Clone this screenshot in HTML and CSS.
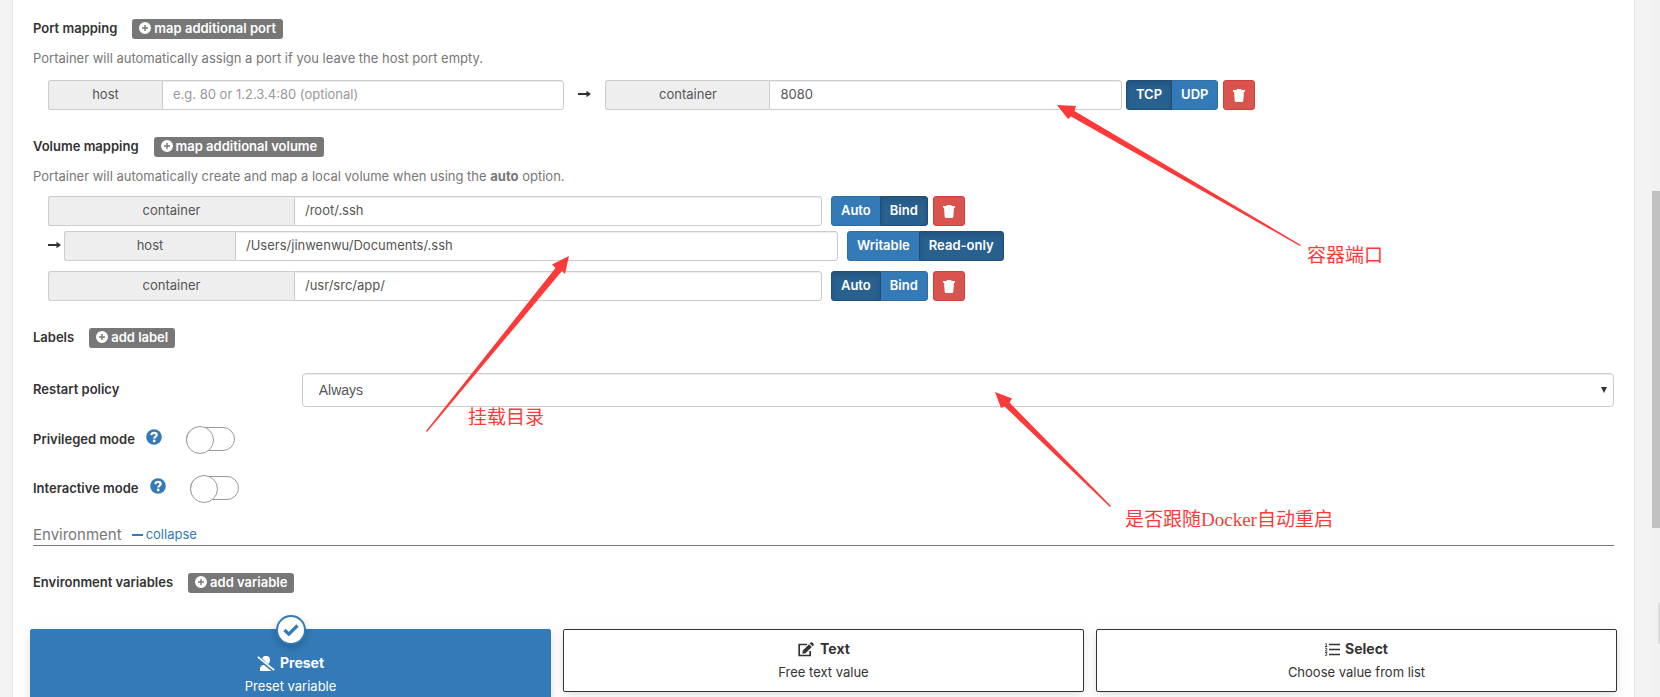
FILE: index.html
```html
<!DOCTYPE html>
<html lang="en">
<head>
  <meta charset="UTF-8">
  <meta name="viewport" content="width=device-width, initial-scale=1.0">
  <title>Portainer</title>
  <link rel="stylesheet" href="styles.css">
</head>
<body>
  <!-- shared icons -->
  <svg class="sprite" aria-hidden="true">
    <symbol id="plus-circle" viewBox="0 0 12 12">
      <path fill-rule="evenodd" d="M6 0a6 6 0 1 0 0 12A6 6 0 0 0 6 0zM5.3 3h1.4v2.3H9v1.4H6.700V9H5.300V6.700H3V5.300h2.300z"/>
    </symbol>
    <symbol id="trash" viewBox="0 0 12 13">
      <path d="M4 0h4l.6 1H12v1.800H0V1h3.400zM1 2.800h10l-.7 9q-.1 1.200-1.200 1.200H2.900q-1.100 0-1.200-1.200z"/>
    </symbol>
    <symbol id="arrow-right" viewBox="0 0 13 8">
      <path d="M0 3h8.500V.8L13 4 8.500 7.200V5H0z"/>
    </symbol>
    <symbol id="question" viewBox="0 0 16 16">
      <circle cx="8" cy="8" r="7.800"/>
      <path d="M5.300 6.200C5.500 4.500 6.600 3.800 8.100 3.800c1.600 0 2.600.8 2.600 2.100 0 1.700-2.400 1.700-2.400 3.500" fill="none" stroke="#fff" stroke-width="2.200"/>
      <circle cx="8.200" cy="12" r="1.400" fill="#fff"/>
    </symbol>
  </svg>

  <main class="panel">
    <form class="form">
      <div class="section-head">
        <span class="title">Port mapping</span>
        <button type="button" class="badge"><svg class="icon-plus"><use href="#plus-circle"/></svg>map additional port</button>
      </div>
      <p class="help">Portainer will automatically assign a port if you leave the host port empty.</p>
      <div class="rows ports">
        <div class="row">
          <div class="input-group third">
            <label class="addon addon-xs" for="port_host">host</label>
            <input type="text" id="port_host" placeholder="e.g. 80 or 1.2.3.4:80 (optional)">
          </div>
          <svg class="icon-arrow between"><use href="#arrow-right"/></svg>
          <div class="input-group third">
            <label class="addon addon-sm" for="port_container">container</label>
            <input type="text" id="port_container" value="8080">
          </div>
          <div class="actions close">
            <div class="btn-group"><button type="button" class="btn active">TCP</button><button type="button" class="btn">UDP</button></div>
            <button type="button" class="btn btn-danger" aria-label="Remove port"><svg class="icon-trash"><use href="#trash"/></svg></button>
          </div>
        </div>
      </div>

      <div class="section-head spaced">
        <span class="title">Volume mapping</span>
        <button type="button" class="badge"><svg class="icon-plus"><use href="#plus-circle"/></svg>map additional volume</button>
      </div>
      <p class="help">Portainer will automatically create and map a local volume when using the <b>auto</b> option.</p>
      <div class="rows">
        <div class="volume">
          <div class="row">
            <div class="input-group half">
              <label class="addon addon-lg" for="vol1">container</label>
              <input type="text" id="vol1" value="/root/.ssh">
            </div>
            <div class="actions">
              <div class="btn-group"><button type="button" class="btn">Auto</button><button type="button" class="btn active">Bind</button></div>
              <button type="button" class="btn btn-danger" aria-label="Remove volume"><svg class="icon-trash"><use href="#trash"/></svg></button>
            </div>
          </div>
          <div class="row">
            <svg class="icon-arrow lead"><use href="#arrow-right"/></svg>
            <div class="input-group half">
              <label class="addon addon-md" for="vol1_host">host</label>
              <input type="text" id="vol1_host" value="/Users/jinwenwu/Documents/.ssh">
            </div>
            <div class="actions">
              <div class="btn-group"><button type="button" class="btn">Writable</button><button type="button" class="btn active">Read-only</button></div>
            </div>
          </div>
        </div>
        <div class="volume">
          <div class="row">
            <div class="input-group half">
              <label class="addon addon-lg" for="vol2">container</label>
              <input type="text" id="vol2" value="/usr/src/app/">
            </div>
            <div class="actions">
              <div class="btn-group"><button type="button" class="btn active">Auto</button><button type="button" class="btn">Bind</button></div>
              <button type="button" class="btn btn-danger" aria-label="Remove volume"><svg class="icon-trash"><use href="#trash"/></svg></button>
            </div>
          </div>
        </div>
      </div>

      <div class="section-head spaced">
        <span class="title">Labels</span>
        <button type="button" class="badge"><svg class="icon-plus"><use href="#plus-circle"/></svg>add label</button>
      </div>

      <div class="restart">
        <label class="title" for="restart_policy">Restart policy</label>
        <div class="select-wrap">
          <select id="restart_policy">
            <option>Always</option>
            <option>Unless stopped</option>
            <option>On failure</option>
            <option>None</option>
          </select>
          <svg class="caret" viewBox="0 0 6 6"><path d="M0 0h6L3 6z"/></svg>
        </div>
      </div>

      <div class="switch-row">
        <label class="title" for="privileged">Privileged mode</label>
        <svg class="icon-help"><use href="#question"/></svg>
        <input type="checkbox" class="switch" id="privileged">
      </div>
      <div class="switch-row">
        <label class="title" for="interactive">Interactive mode</label>
        <svg class="icon-help"><use href="#question"/></svg>
        <input type="checkbox" class="switch" id="interactive">
      </div>

      <div class="section-title">
        <span>Environment</span>
        <a href="#"><svg class="icon-minus" viewBox="0 0 11 2"><path d="M0 0h11v2H0z"/></svg>collapse</a>
      </div>

      <div class="section-head env-head">
        <span class="title">Environment variables</span>
        <button type="button" class="badge"><svg class="icon-plus"><use href="#plus-circle"/></svg>add variable</button>
      </div>
    </form>

    <div class="cards">
      <button type="button" class="card selected">
        <span class="check"><svg viewBox="0 0 16 12"><path d="M1.500 6l4.300 4.200L14.500 1.500" fill="none" stroke="currentColor" stroke-width="3.200"/></svg></span>
        <span class="card-title">
          <svg class="icon-card" viewBox="0 0 18 15"><path d="M5.200 2.600A4 4 0 0 1 13 4.200c0 1.700-.8 3.200-2 3.900zM3 15v-2.200C3 10.600 4.500 9.300 7 9.100l7.500 5.900z"/><path d="M.8.800l16.400 13.400" fill="none" stroke="currentColor" stroke-width="1.700"/></svg>
          Preset
        </span>
        <span class="card-text">Preset variable</span>
      </button>
      <button type="button" class="card">
        <span class="card-title">
          <svg class="icon-card" viewBox="0 0 18 15"><path d="M10 2.500H2.200v11h11V9" fill="none" stroke="currentColor" stroke-width="1.700"/><path d="M5.800 8.500l6.200-6.200 2.800 2.800-6.200 6.200-3.200.5zM12.800 1.500l.9-.9q.8-.6 1.600 0l1.200 1.200q.6.800 0 1.600l-.9.900z"/></svg>
          Text
        </span>
        <span class="card-text">Free text value</span>
      </button>
      <button type="button" class="card">
        <span class="card-title">
          <svg class="icon-list" viewBox="0 0 15 13"><path d="M4 1.500h11M4 6.500h11M4 11.500h11" fill="none" stroke="currentColor" stroke-width="1.700"/><path d="M.3.800h1V3.500M0 3.500h2.300M0 5.200h1.800v1.300L.3 8h2M0 9.500h2L1 10.800q1.200 0 1 1-.4.900-2 .6" fill="none" stroke="currentColor" stroke-width=".9"/></svg>
          Select
        </span>
        <span class="card-text">Choose value from list</span>
      </button>
    </div>
  </main>

  <div class="scrollbar"><div class="thumb"></div><div class="handle"></div></div>

  <!-- red notes over the form -->
  <svg class="arrows" aria-hidden="true">
    <path d="M1057 105l19 1-1.500 5L1301 245l-1 1L1071 116.500l-3 2.500z"/>
    <path d="M569 256l-4 18-3-3L427 432l-1-1L555.500 268l-3.500-3.500z"/>
    <path d="M995 392l17 6.500-2.500 4L1111 506l-1 1L1004.500 406.500l-3.500 1.500z"/>
  </svg>
  <span class="note note-port">容器端口</span>
  <span class="note note-volume">挂载目录</span>
  <span class="note note-restart">是否跟随Docker自动重启</span>
</body>
</html>
```

FILE: styles.css
```css
* {
  box-sizing: border-box;
}

body {
  display: flex;
  position: relative;
  height: 100vh;
  margin: 0;
  padding-left: 12px;
  overflow: hidden;
  background-color: #f3f3f3;
  color: #333;
  font-family: Inter, "Noto Sans", sans-serif;
  font-size: 13px;
  line-height: 20px;
}

button,
input {
  font-family: inherit;
  font-size: 13px;
}

svg {
  flex: none;
  fill: currentColor;
}

.sprite {
  position: absolute;
  width: 0;
  height: 0;
}

.panel {
  flex: 1;
  min-width: 0;
  height: max-content;
  padding-top: 19px;
  border: 1px solid #e7e7e7;
  border-top: 0;
  background-color: #fff;
}

.form {
  padding: 0 20px;
}

/* headings */
.section-head {
  display: flex;
  align-items: flex-start;
  gap: 15px;
}

.section-head .title {
  line-height: 18px;
}

.spaced {
  margin-top: 27px;
}

.title {
  font-weight: 600;
}

.badge {
  display: flex;
  align-items: center;
  gap: 3px;
  height: 20px;
  padding: 0 7px 2px;
  border: 0;
  border-radius: 3px;
  background-color: #777;
  color: #fff;
  font-weight: 600;
  line-height: 18px;
}

.icon-plus {
  width: 12px;
  height: 12px;
}

.help {
  margin: 9px 0 10px;
  color: #777;
}

/* mapping rows */
.rows {
  display: flex;
  flex-direction: column;
  gap: 10px;
  padding: 0 15px;
}

.ports {
  padding-top: 2px;
}

.volume {
  display: flex;
  flex-direction: column;
  gap: 5px;
}

.row {
  display: flex;
  align-items: center;
}

.input-group {
  display: flex;
  height: 30px;
}

.third {
  width: 33.3%;
}

.half {
  width: 49.9%;
}

.addon {
  padding: 3px 0;
  border: 1px solid #ccc;
  border-right: 0;
  border-radius: 3px 0 0 3px;
  background-color: #eee;
  color: #555;
  text-align: center;
}

.addon-xs { width: 114px; }
.addon-sm { width: 164px; }
.addon-md { width: 171px; }
.addon-lg { width: 246px; }

.input-group input {
  flex: 1;
  min-width: 0;
  padding: 0 10px 2px;
  border: 1px solid #ccc;
  border-radius: 0 3px 3px 0;
  box-shadow: inset 0 1px 1px rgba(0, 0, 0, .075);
  background-color: #fff;
  color: #555;
}

.input-group input::placeholder {
  color: #999;
}

.icon-arrow {
  width: 13px;
  height: 8px;
}

.between {
  margin: 0 14px 2px;
}

.lead {
  margin: 0 3px 2px 0;
}

.actions {
  display: flex;
  gap: 5px;
  margin-left: 9px;
}

.close {
  margin-left: 4px;
}

.btn-group {
  display: flex;
}

.btn {
  height: 30px;
  padding: 0 9px 2px;
  border: 1px solid #2e6da4;
  border-radius: 3px;
  background-color: #337ab7;
  color: #fff;
  font-weight: 600;
}

.btn-group .btn:first-child {
  border-radius: 3px 0 0 3px;
}

.btn-group .btn:last-child {
  margin-left: -1px;
  border-radius: 0 3px 3px 0;
}

.btn.active {
  z-index: 1;
  border-color: #204d74;
  background-color: #286090;
  box-shadow: inset 0 3px 5px rgba(0, 0, 0, .125);
}

.btn-danger {
  display: flex;
  align-items: center;
  justify-content: center;
  width: 32px;
  padding: 0;
  border-color: #d43f3a;
  background-color: #d9534f;
}

.icon-trash {
  width: 12px;
  height: 13px;
}

/* restart policy */
.restart {
  display: flex;
  align-items: center;
  margin-top: 25px;
}

.restart .title {
  width: 17%;
  padding-bottom: 2px;
}

.select-wrap {
  position: relative;
  flex: 1;
}

.select-wrap select {
  display: block;
  appearance: none;
  width: 100%;
  height: 34px;
  padding: 0 16px;
  border: 1px solid #ccc;
  border-radius: 4px;
  box-shadow: inset 0 1px 1px rgba(0, 0, 0, .075);
  background-color: #fff;
  color: #555;
  font-family: "Liberation Sans", Arial, sans-serif;
  font-size: 14px;
}

.caret {
  position: absolute;
  top: 14px;
  right: 7px;
  width: 6px;
  height: 6px;
}

/* switches */
.switch-row {
  display: flex;
  align-items: center;
  height: 26px;
  margin-top: 19px;
}

.switch-row + .switch-row {
  margin-top: 23px;
}

.icon-help {
  width: 16px;
  height: 16px;
  margin: 0 24px 4px 11px;
  color: #337ab7;
}

.switch {
  appearance: none;
  position: relative;
  width: 49px;
  height: 24px;
  margin: 0;
  border: 1px solid #999;
  border-radius: 12px;
  background-color: #fff;
}

.switch::before {
  content: "";
  position: absolute;
  top: -2px;
  left: -1px;
  width: 26px;
  height: 26px;
  border: 1px solid #999;
  border-radius: 50%;
  background-color: #fff;
}

/* environment */
.section-title {
  display: flex;
  align-items: center;
  gap: 10px;
  margin-top: 23px;
  border-bottom: 1px solid #777;
  color: #777;
  font-size: 15px;
  line-height: 21px;
}

.section-title a {
  display: flex;
  align-items: center;
  gap: 3px;
  color: #337ab7;
  font-size: 13px;
  text-decoration: none;
}

.icon-minus {
  width: 11px;
  height: 2px;
}

.env-head {
  margin-top: 27px;
}

.cards {
  display: flex;
  align-items: flex-start;
  gap: 12px;
  margin-top: 36px;
  padding: 0 17px 20px;
}

.card {
  display: flex;
  flex: 1;
  flex-direction: column;
  align-items: center;
  gap: 3px;
  position: relative;
  padding: 9px 10px;
  border: 1px solid #333;
  border-radius: 2px;
  box-shadow: 0 3px 10px -2px rgba(161, 170, 166, .5);
  background-color: #fff;
  color: #333;
  line-height: 20px;
}

.card.selected {
  padding: 23px 10px;
  border-color: #337ab7;
  background-color: #337ab7;
  color: #fff;
}

.card-title {
  display: flex;
  align-items: center;
  gap: 5px;
  font-size: 14px;
  font-weight: 700;
}

.icon-card {
  width: 18px;
  height: 15px;
}

.icon-list {
  width: 15px;
  height: 13px;
}

.check {
  display: flex;
  align-items: center;
  justify-content: center;
  position: absolute;
  top: -15px;
  left: calc(50% - 15px);
  width: 30px;
  height: 30px;
  border: 2px solid #337ab7;
  border-radius: 50%;
  box-shadow: 0 3px 10px -2px rgba(0, 0, 0, .3);
  background-color: #fff;
  color: #337ab7;
}

.check svg {
  width: 16px;
  height: 12px;
}

/* page scrollbar */
.scrollbar {
  position: relative;
  width: 9px;
  margin-left: 16px;
  padding-left: 1px;
  background-color: #f1f1f1;
}

.thumb {
  height: 337px;
  margin-top: 191px;
  background-color: #c1c1c1;
}

.handle {
  position: absolute;
  top: 602px;
  right: 0;
  width: 2px;
  height: 42px;
  border-radius: 2px 0 0 2px;
  background-color: #ddd;
}

/* notes */
.arrows {
  position: absolute;
  top: 0;
  left: 0;
  width: 100%;
  height: 100%;
  fill: #fd3a3a;
  pointer-events: none;
}

.note {
  position: absolute;
  color: #fd3a3a;
  font-family: "Liberation Serif", "Noto Sans CJK SC", serif;
  font-size: 19px;
  line-height: 24px;
}

.note-port {
  top: 244px;
  left: 1307px;
}

.note-volume {
  top: 406px;
  left: 468px;
}

.note-restart {
  top: 508px;
  left: 1125px;
}
```
